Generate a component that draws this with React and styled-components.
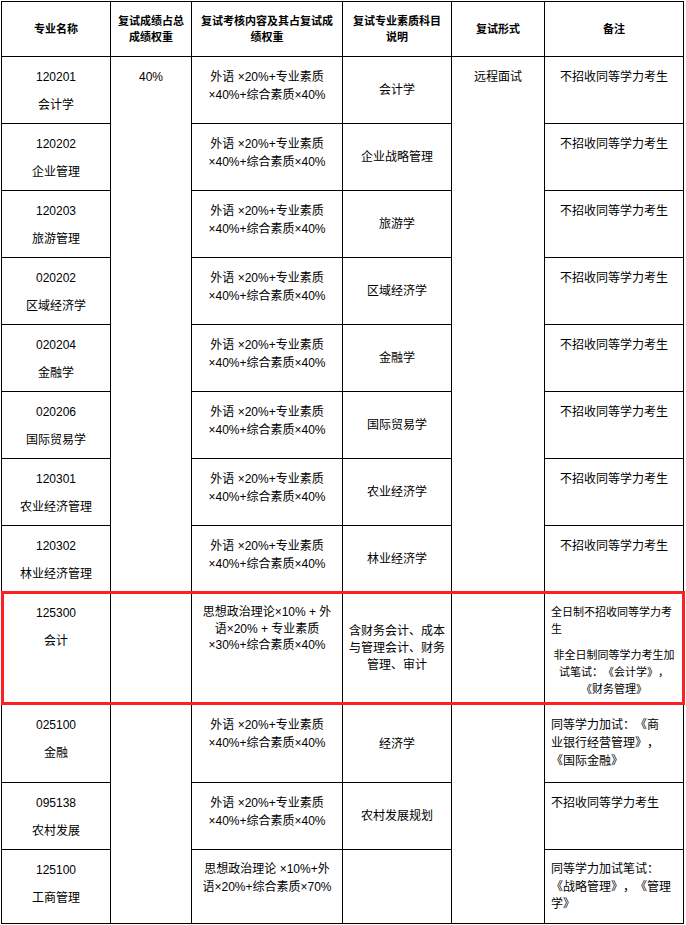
import React from "react";
import styled, { createGlobalStyle } from "styled-components";

const GlobalStyle = createGlobalStyle`
  body {
    margin: 0;
    background: #fff;
  }
`;

const A = ["外语 ×20%+专业素质", "×40%+综合素质×40%"];
const CENTER_NOTE = { align: "center", paras: [["不招收同等学力考生"]] };

const rows = [
  { code: "120201", name: "会计学", formula: A, subject: ["会计学"], note: CENTER_NOTE },
  { code: "120202", name: "企业管理", formula: A, subject: ["企业战略管理"], note: CENTER_NOTE },
  { code: "120203", name: "旅游管理", formula: A, subject: ["旅游学"], note: CENTER_NOTE },
  { code: "020202", name: "区域经济学", formula: A, subject: ["区域经济学"], note: CENTER_NOTE },
  { code: "020204", name: "金融学", formula: A, subject: ["金融学"], note: CENTER_NOTE },
  { code: "020206", name: "国际贸易学", formula: A, subject: ["国际贸易学"], note: CENTER_NOTE },
  { code: "120301", name: "农业经济管理", formula: A, subject: ["农业经济学"], note: CENTER_NOTE },
  { code: "120302", name: "林业经济管理", formula: A, subject: ["林业经济学"], note: CENTER_NOTE },
  {
    code: "125300",
    name: "会计",
    h: 112,
    lh: 16.7,
    formula: ["思想政治理论×10% + 外", "语×20% + 专业素质", "×30%+综合素质×40%"],
    subject: ["含财务会计、成本", "与管理会计、财务", "管理、审计"],
    note: {
      align: "left",
      size: 11,
      paras: [
        ["全日制不招收同等学力考", "生"],
        ["非全日制同等学力考生加", "试笔试：《会计学》，", "《财务管理》"],
      ],
      secondCenter: true,
    },
  },
  {
    code: "025100",
    name: "金融",
    h: 78,
    formula: A,
    subject: ["经济学"],
    note: { align: "left", paras: [["同等学力加试：《商", "业银行经营管理》，", "《国际金融》"]] },
  },
  {
    code: "095138",
    name: "农村发展",
    formula: A,
    subject: ["农村发展规划"],
    note: { align: "left", paras: [["不招收同等学力考生"]] },
  },
  {
    code: "125100",
    name: "工商管理",
    h: 74,
    lh: 17.6,
    formula: ["思想政治理论 ×10%+外", "语×20%+综合素质×70%"],
    subject: [],
    note: { align: "left", paras: [["同等学力加试笔试：", "《战略管理》，《管理", "学》"]] },
  },
];

const widths = [109, 81, 151, 109, 93, 139];

const Wrapper = styled.div`
  position: relative;
  width: 686px;
  padding: 1px 0 0 1px;
  box-sizing: border-box;
`;

const Table = styled.table`
  border-collapse: collapse;
  table-layout: fixed;
  width: 683px;
  font-family: "Liberation Sans", "Noto Sans CJK SC", sans-serif;
  font-size: 12px;
  color: #000;
  text-spacing-trim: space-all;
`;

const Col = styled.col`
  width: ${(p) => p.$w}px;
`;

const Row = styled.tr`
  height: ${(p) => p.$h}px;
`;

const HeadCell = styled.th`
  border: 1px solid #000;
  padding: 0 6px;
  font-size: 11px;
  font-weight: bold;
  line-height: 16px;
  text-align: center;
  vertical-align: middle;
`;

const Cell = styled.td`
  border: 1px solid #000;
  padding: ${(p) => (p.$middle ? "4px 5px" : "11px 6px 4px")};
  font-size: ${(p) => p.$size || 12}px;
  line-height: ${(p) => p.$lh || 18}px;
  text-align: ${(p) => p.$align || "center"};
  vertical-align: ${(p) => (p.$middle ? "middle" : "top")};
  white-space: nowrap;
`;

const Para = styled.p`
  margin: 0;
  text-align: ${(p) => p.$align || "inherit"};
  & + & {
    margin-top: ${(p) => p.$gap || 9}px;
  }
`;

const Highlight = styled.div`
  position: absolute;
  left: 1px;
  top: 591px;
  width: 684px;
  height: 114px;
  box-sizing: border-box;
  border: 3px solid #fe2020;
  pointer-events: none;
`;

const Lines = ({ items }) =>
  items.map((t, i) => (
    <React.Fragment key={i}>
      {i > 0 && <br />}
      {t}
    </React.Fragment>
  ));

export default function App() {
  return (
    <>
      <GlobalStyle />
      <Wrapper>
        <Table>
          <colgroup>
            {widths.map((w, i) => (
              <Col key={i} $w={w} />
            ))}
          </colgroup>
          <thead>
            <Row $h={55}>
              <HeadCell>专业名称</HeadCell>
              <HeadCell>
                复试成绩占总
                <br />
                成绩权重
              </HeadCell>
              <HeadCell>
                复试考核内容及其占复试成
                <br />
                绩权重
              </HeadCell>
              <HeadCell>
                复试专业素质科目
                <br />
                说明
              </HeadCell>
              <HeadCell>复试形式</HeadCell>
              <HeadCell>备注</HeadCell>
            </Row>
          </thead>
          <tbody>
            {rows.map((r, i) => (
              <Row key={r.code} $h={r.h || 67}>
                <Cell>
                  <Para>{r.code}</Para>
                  <Para>{r.name}</Para>
                </Cell>
                {i === 0 && <Cell rowSpan={rows.length}>40%</Cell>}
                <Cell $lh={r.lh}>
                  <Lines items={r.formula} />
                </Cell>
                <Cell $middle $lh={r.lh}>
                  <Lines items={r.subject} />
                </Cell>
                {i === 0 && <Cell rowSpan={rows.length}>远程面试</Cell>}
                <Cell $align={r.note.align} $lh={r.lh} $size={r.note.size}>
                  {r.note.paras.map((p, j) => (
                    <Para
                      key={j}
                      $gap={10}
                      $align={r.note.secondCenter && j === 1 ? "center" : undefined}
                    >
                      <Lines items={p} />
                    </Para>
                  ))}
                </Cell>
              </Row>
            ))}
          </tbody>
        </Table>
        <Highlight />
      </Wrapper>
    </>
  );
}
